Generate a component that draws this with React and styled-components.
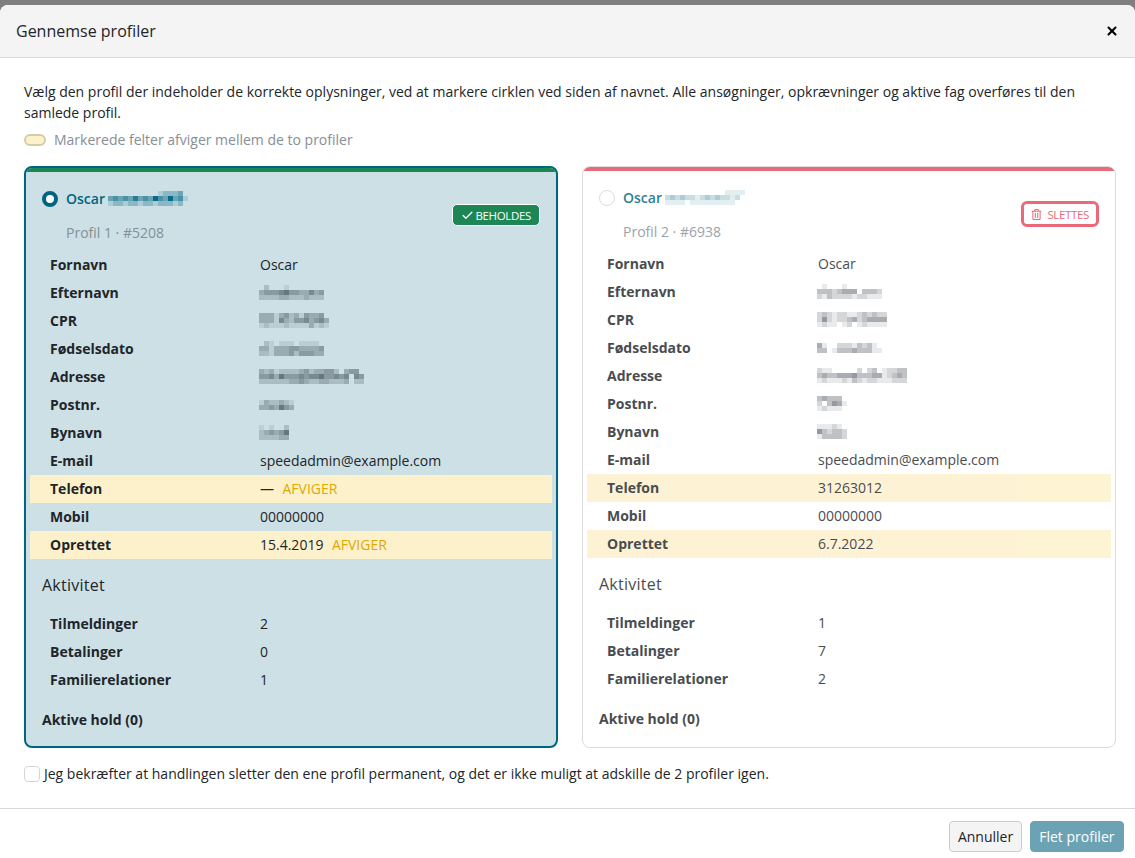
import styled, { createGlobalStyle } from 'styled-components';
import { Check, X } from 'lucide-react';
import { FaRegTrashAlt } from 'react-icons/fa';

const GlobalStyle = createGlobalStyle`
  html, body {
    margin: 0;
    height: 100%;
    overflow: hidden;
    background: #7f7f7f;
  }
  * { box-sizing: border-box; }
`;

const Modal = styled.div`
  height: 853px;
  margin-top: 5px;
  display: flex;
  flex-direction: column;
  background: #fff;
  border-radius: 8px 8px 0 0;
  overflow: hidden;
  font-family: "Open Sans", sans-serif;
  font-size: 14px;
  line-height: 21px;
  color: #212529;
`;

const Header = styled.div`
  height: 53px;
  flex: none;
  display: flex;
  align-items: center;
  justify-content: space-between;
  padding: 0 16px;
  background: #f4f4f4;
  border-bottom: 1px solid #d9d9d9;
  font-size: 16px;
`;

const CloseButton = styled.div`
  display: flex;
  color: #000;
`;

const Body = styled.div`
  flex: 1;
  padding: 23px 19px 0 24px;
`;

const Intro = styled.p`
  margin: 0;
`;

const Legend = styled.div`
  display: flex;
  align-items: center;
  gap: 8px;
  margin-top: 6px;
  color: #868e96;
`;

const Swatch = styled.span`
  width: 22px;
  height: 12px;
  border-radius: 6px;
  background: #fdf1cb;
  border: 2px solid #d6cda6;
`;

const Cards = styled.div`
  display: grid;
  grid-template-columns: 534px 534px;
  gap: 24px;
  margin-top: 16px;
`;

const Card = styled.div`
  display: flex;
  flex-direction: column;
  height: 582px;
  border-radius: 8px;
  overflow: hidden;
  background: ${({ $selected }) => ($selected ? '#cde0e6' : '#fff')};
  border: ${({ $selected }) => ($selected ? '2px solid #006580' : '1px solid #dcdcdc')};
`;

const Stripe = styled.div`
  height: 4px;
  flex: none;
  background: ${({ $selected }) => ($selected ? '#1c8754' : '#e96a78')};
`;

const CardInner = styled.div`
  flex: 1;
  opacity: ${({ $selected }) => ($selected ? 1 : 0.82)};
`;

const CardTop = styled.div`
  display: flex;
  align-items: center;
  justify-content: space-between;
  padding: 16px 16px 8px 16px;
`;

const NameRow = styled.div`
  display: flex;
  align-items: center;
  gap: 8px;
  font-weight: 600;
  color: #006580;
`;

const Radio = styled.span`
  width: 16px;
  height: 16px;
  border-radius: 50%;
  background: #fff;
  border: ${({ $checked }) => ($checked ? '4px solid #006580' : '1px solid #d5d5d5')};
`;

const Name = styled.span`
  display: flex;
  align-items: center;
  gap: 4px;
`;

const SubTitle = styled.div`
  margin: 13px 0 0 24px;
  color: #868e96;
`;

const KeepBadge = styled.div`
  display: flex;
  align-items: center;
  gap: 2px;
  height: 22px;
  padding: 0 8px;
  margin-bottom: 1px;
  border: 1px solid #fff;
  border-radius: 5px;
  background: #1c8754;
  color: #fff;
  font-size: 11.5px;
  font-weight: 500;
  letter-spacing: -0.35px;
`;

const DeleteBadge = styled.div`
  display: flex;
  align-items: center;
  gap: 5px;
  height: 26px;
  padding: 0 7px;
  margin-bottom: 1px;
  border: 3px solid #e96a78;
  border-radius: 6px;
  color: #e96a78;
  font-size: 11.5px;
  letter-spacing: -0.35px;
`;

const Rows = styled.div`
  padding: 0 4px;
`;

const Row = styled.div`
  display: grid;
  grid-template-columns: ${({ $selected }) => ($selected ? '210px' : '211px')} 1fr;
  align-items: start;
  height: 28px;
  padding: 3px 0 0 20px;
  background: ${({ $differs }) => ($differs ? '#fdf1cb' : 'transparent')};
`;

const Label = styled.span`
  font-weight: 700;
`;

const Value = styled.span`
  display: flex;
  align-items: center;
  gap: 8.5px;
  min-height: 21px;
`;

const Differs = styled.span`
  color: #e0a800;
`;

const SectionTitle = styled.div`
  margin: 15px 16px 14px;
  font-size: 16px;
  line-height: 22px;
  font-weight: 500;
  letter-spacing: 0.25px;
`;

const ActiveTeams = styled.div`
  margin: 15px 16px 0;
  font-weight: 700;
`;

const Confirm = styled.label`
  display: flex;
  align-items: center;
  gap: 4px;
  margin-top: 15px;
`;

const Checkbox = styled.span`
  width: 16px;
  height: 16px;
  border: 1px solid #d5d5d5;
  border-radius: 4px;
  background: #fff;
`;

const Footer = styled.div`
  height: 50px;
  flex: none;
  display: flex;
  justify-content: flex-end;
  align-items: flex-start;
  gap: 8px;
  padding: 12px 11px 0 0;
  border-top: 1px solid #d9d9d9;
`;

const Button = styled.div`
  height: 31px;
  padding: 0 ${({ $primary }) => ($primary ? '8.5px' : '7.5px')};
  display: flex;
  align-items: center;
  border-radius: 4px;
  border: 1px solid ${({ $primary }) => ($primary ? '#6ca3b4' : '#cccccc')};
  background: ${({ $primary }) => ($primary ? '#6ca3b4' : '#f4f4f4')};
  color: ${({ $primary }) => ($primary ? '#fff' : '#212529')};
`;

const MosaicSvg = styled.svg`
  display: block;
  margin-left: -1px;
`;

// anonymised text in the picture: each digit is one 5px cell's darkness
const Mosaic = ({ rows, color = '#25313a', scale = 0.1 }) => {
  const width = Math.max(...rows.map(r => r.length)) * 5;
  return (
    <MosaicSvg width={width} height={rows.length * 5} shapeRendering="crispEdges">
      {rows.map((row, y) =>
        row.split('').map((c, x) => (
          <rect key={`${x}-${y}`} x={x * 5} y={y * 5} width="5" height="5" fill={color} fillOpacity={Number(c) * scale} />
        ))
      )}
    </MosaicSvg>
  );
};

const PROFILES = [
  {
    selected: true,
    number: 'Profil 1 · #5208',
    nameMosaic: ['0000000000122230', '3434353436436341', '1221221221222120'],
    fields: [
      ['Fornavn', 'Oscar'],
      ['Efternavn', ['0200010000000', '3444564433534', '2222332223222']],
      ['CPR', ['333134231433400', '333153244534530', '121112111131210']],
      ['Fødselsdato', ['0210111011110', '3313334433334', '2213334244433']],
      ['Adresse', ['323122223423344203440', '445364445455644545054', '222222334322332223022']],
      ['Postnr.', ['1322321', '3343643']],
      ['Bynavn', ['101002', '234346', '222233']],
      ['E-mail', 'speedadmin@example.com'],
      ['Telefon', '—', true, true],
      ['Mobil', '00000000'],
      ['Oprettet', '15.4.2019', true, true],
    ],
    activity: [['Tilmeldinger', '2'], ['Betalinger', '0'], ['Familierelationer', '1']],
  },
  {
    selected: false,
    number: 'Profil 2 · #6938',
    nameMosaic: ['0000000000001111', '2323221232322120', '1111011111111100'],
    fields: [
      ['Fornavn', 'Oscar'],
      ['Efternavn', ['0100010000000', '3332344403332', '2132222122111']],
      ['CPR', ['232122112323220', '252122342344440', '121101201211110']],
      ['Fødselsdato', ['4100222132310', '3301333433311']],
      ['Adresse', ['211000002023012233', '343344453334412343', '121112132122111222']],
      ['Postnr.', ['343330', '203541', '121110']],
      ['Bynavn', ['111210', '532332', '133332']],
      ['E-mail', 'speedadmin@example.com'],
      ['Telefon', '31263012', true],
      ['Mobil', '00000000'],
      ['Oprettet', '6.7.2022', true],
    ],
    activity: [['Tilmeldinger', '1'], ['Betalinger', '7'], ['Familierelationer', '2']],
  },
];

const ProfileCard = ({ profile }) => {
  const { selected } = profile;
  return (
    <Card $selected={selected}>
      <Stripe $selected={selected} />
      <CardTop>
        <CardInner $selected={selected}>
          <NameRow>
            <Radio $checked={selected} />
            <Name>
              Oscar
              <Mosaic rows={profile.nameMosaic} color="#006580" scale={selected ? 0.16 : 0.13} />
            </Name>
          </NameRow>
          <SubTitle>{profile.number}</SubTitle>
        </CardInner>
        {selected ? (
          <KeepBadge><Check size={13} strokeWidth={2.5} />BEHOLDES</KeepBadge>
        ) : (
          <DeleteBadge><FaRegTrashAlt size={11} />SLETTES</DeleteBadge>
        )}
      </CardTop>
      <CardInner $selected={selected}>
        <Rows>
          {profile.fields.map(([label, value, differs, flagged]) => (
            <Row key={label} $differs={differs} $selected={selected}>
              <Label>{label}</Label>
              <Value>
                {Array.isArray(value) ? <Mosaic rows={value} scale={selected ? 0.1 : 0.12} /> : value}
                {flagged && <Differs>AFVIGER</Differs>}
              </Value>
            </Row>
          ))}
        </Rows>
        <SectionTitle>Aktivitet</SectionTitle>
        <Rows>
          {profile.activity.map(([label, value]) => (
            <Row key={label} $selected={selected}>
              <Label>{label}</Label>
              <Value>{value}</Value>
            </Row>
          ))}
        </Rows>
        <ActiveTeams>Aktive hold (0)</ActiveTeams>
      </CardInner>
    </Card>
  );
};

const App = () => (
  <>
    <GlobalStyle />
    <Modal>
      <Header>
        Gennemse profiler
        <CloseButton><X size={14} strokeWidth={3.5} /></CloseButton>
      </Header>
      <Body>
        <Intro>
          Vælg den profil der indeholder de korrekte oplysninger, ved at markere cirklen ved siden af navnet. Alle
          ansøgninger, opkrævninger og aktive fag overføres til den samlede profil.
        </Intro>
        <Legend><Swatch />Markerede felter afviger mellem de to profiler</Legend>
        <Cards>
          {PROFILES.map(profile => <ProfileCard key={profile.number} profile={profile} />)}
        </Cards>
        <Confirm>
          <Checkbox />
          Jeg bekræfter at handlingen sletter den ene profil permanent, og det er ikke muligt at adskille de 2 profiler igen.
        </Confirm>
      </Body>
      <Footer>
        <Button>Annuller</Button>
        <Button $primary>Flet profiler</Button>
      </Footer>
    </Modal>
  </>
);

export default App;
